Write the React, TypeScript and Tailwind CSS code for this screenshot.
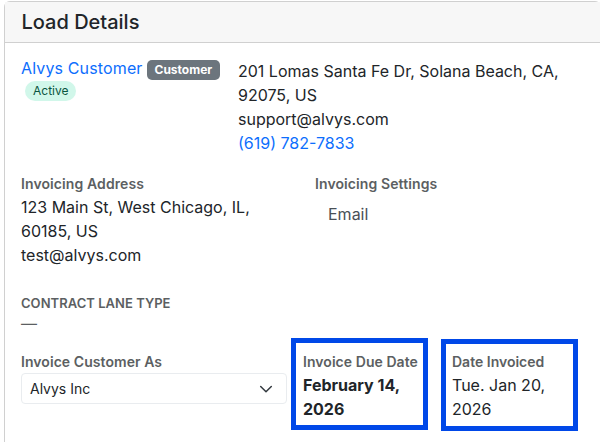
export default function App() {
  return (
    <div className="h-[442px] w-[600px] overflow-hidden bg-white pl-[4px] pt-[1px] font-['Inter',sans-serif] text-[16px] leading-[24px] text-[#212529]">
      <div className="h-[460px] w-[597px] rounded-t-[6px] border border-[#d0d0d0]">
        <div className="flex h-[41px] items-center border-b border-[#d0d0d0] bg-[#f7f7f7] pl-[16.5px] text-[20px] font-medium">
          Load Details
        </div>
        <div className="pl-[16px] pt-[14px]">
          <div className="flex">
            <div className="w-[217px]">
              <div className="flex h-[24px] items-center">
                <span className="mb-[2px] tracking-[0.14px] text-[#0d6efd]">Alvys Customer</span>
                <span className="ml-[4px] mt-[2px] rounded-[5px] bg-[#6c757d] px-[8px] text-[12px] font-bold leading-[20px] text-white">Customer</span>
              </div>
              <span className="ml-[4px] block w-fit rounded-full bg-[#d1f7ea] px-[8px] text-[12px] leading-[20px] text-[#0a5540]">Active</span>
            </div>
            <div className="mt-[2px] w-[330px]">
              <div>201 Lomas Santa Fe Dr, Solana Beach, CA, 92075, US</div>
              <div>support@alvys.com</div>
              <div className="text-[#0d6efd]">(619) 782-7833</div>
            </div>
          </div>
          <div className="mt-[18px] flex">
            <div className="w-[294px]">
              <div className="text-[14px] font-semibold leading-[22px] tracking-[0.1px] text-[#5c5f62]">Invoicing Address</div>
              <div className="w-[260px]">123 Main St, West Chicago, IL, 60185, US</div>
              <div>test@alvys.com</div>
            </div>
            <div>
              <div className="text-[14px] font-semibold leading-[22px] tracking-[0.1px] text-[#5c5f62]">Invoicing Settings</div>
              <div className="ml-[13px] mt-[7px] text-[#495057]">Email</div>
            </div>
          </div>
          <div className="mt-[26px] text-[13px] font-semibold leading-[20px] tracking-[0.03px] text-[#5c5f62]">CONTRACT LANE TYPE</div>
          <div className="mt-[-2px] leading-[24px] text-[#5c5f62]">—</div>
          <div className="mt-[-2px] flex">
            <div className="mt-[18px] w-[266px]">
              <div className="text-[14px] font-semibold leading-[21px] tracking-[0.06px] text-[#5c5f62]">Invoice Customer As</div>
              <div className="mt-[1px] flex h-[31px] items-center justify-between rounded-[4px] border border-[#e9ecef] pl-[8px] pr-[12px] text-[14px]">
                Alvys Inc
                <svg width="16" height="16" viewBox="0 0 16 16" fill="none" stroke="#343a40" strokeWidth="1.5" strokeLinecap="round" strokeLinejoin="round">
                  <path d="m2.7 5.5 5.3 5.3 5.3-5.3" />
                </svg>
              </div>
            </div>
            <div className="ml-[4px] mt-[5px] h-[92px] w-[137px] border-[5px] border-[#0048e8] px-[7px] pt-[7px]">
              <div className="whitespace-nowrap text-[14px] font-semibold leading-[24px] tracking-[0.05px] text-[#5c5f62]">Invoice Due Date</div>
              <div className="font-bold leading-[23.5px]">February 14, 2026</div>
            </div>
            <div className="ml-[13px] mt-[6px] h-[92px] w-[137px] border-[5px] border-[#0048e8] px-[6px] pt-[6px]">
              <div className="whitespace-nowrap text-[14px] font-semibold leading-[24px] text-[#5c5f62]">Date Invoiced</div>
              <div className="leading-[23.5px]">Tue. Jan 20, 2026</div>
            </div>
          </div>
        </div>
      </div>
    </div>
  );
}
